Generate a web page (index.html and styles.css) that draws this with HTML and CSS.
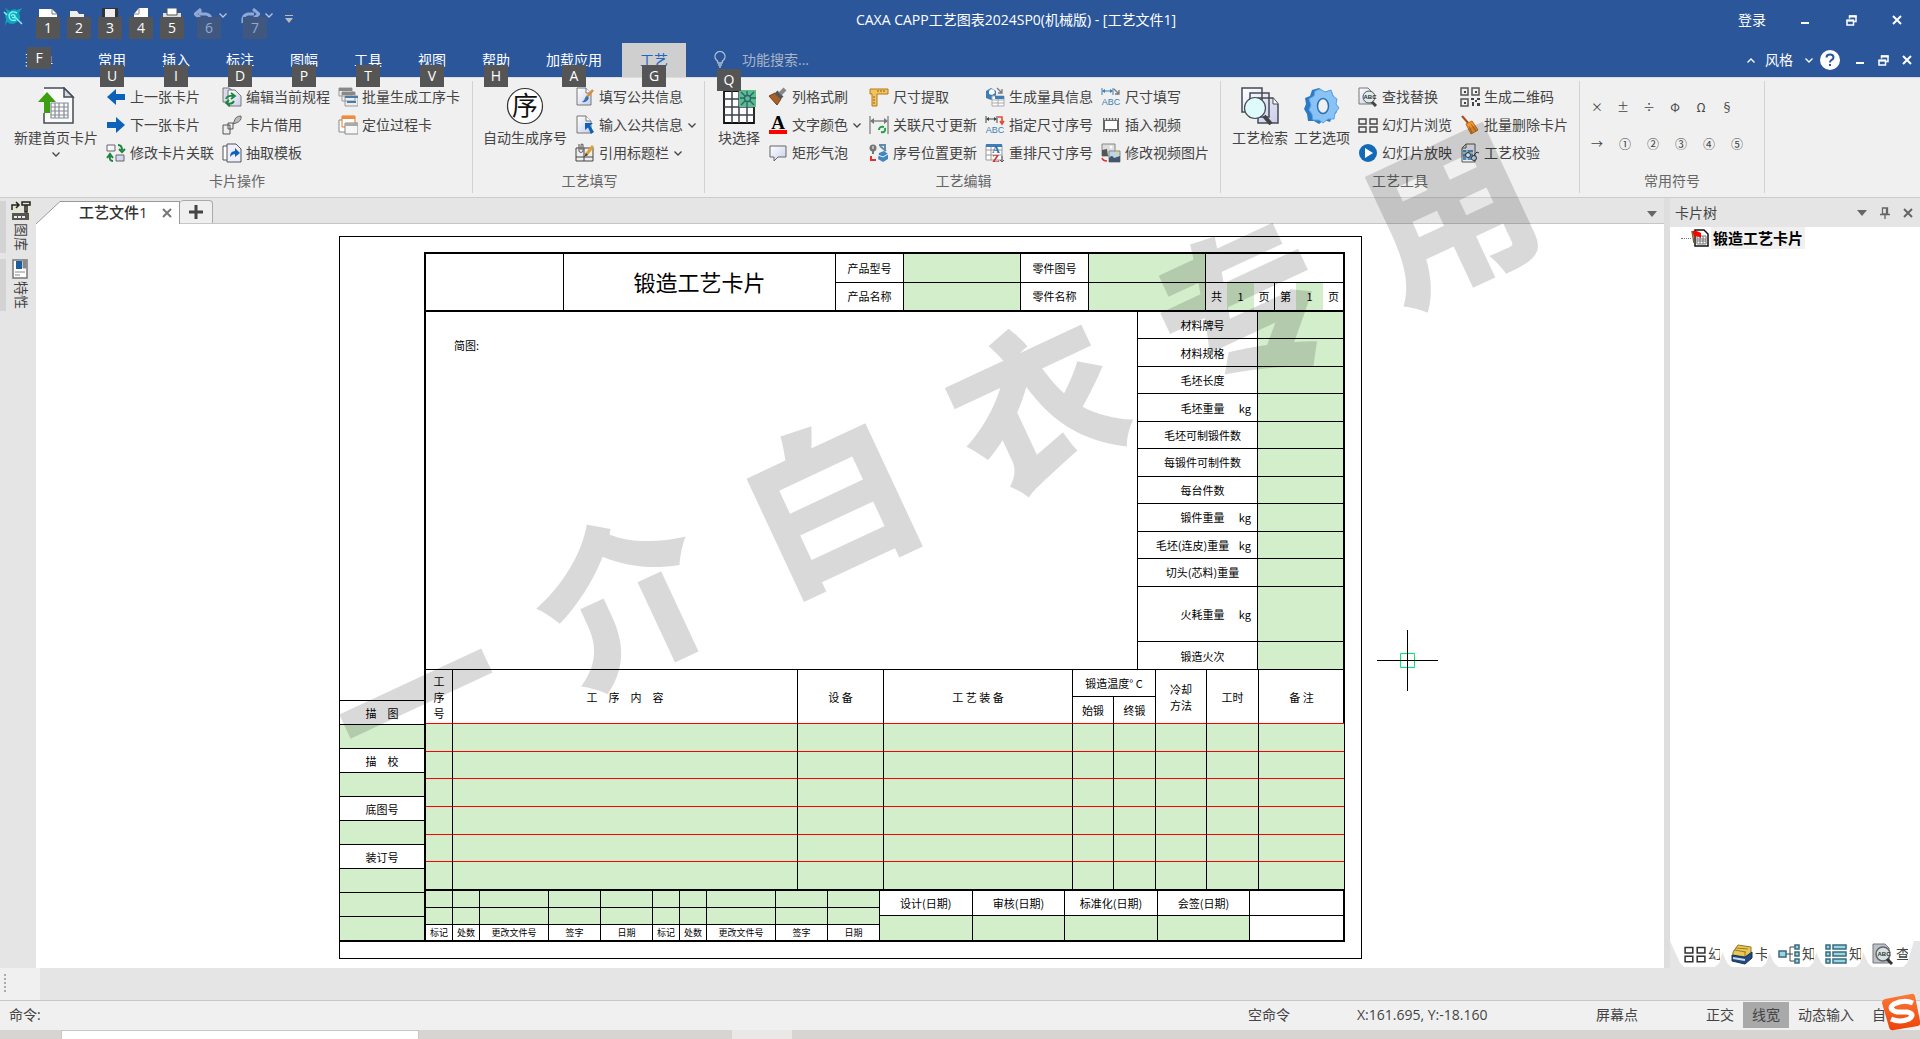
FILE: index.html
```html
<!DOCTYPE html>
<html lang="zh-CN">

<head>
    <meta charset="UTF-8">
    <meta name="viewport" content="width=device-width, initial-scale=1.0">
    <title>CAXA CAPP工艺图表2024SP0(机械版) - [工艺文件1]</title>
    <link rel="stylesheet" href="styles.css">
</head>

<body>

    <!-- 公用图形 -->
    <svg class="defs" width="0" height="0" aria-hidden="true">
        <defs>
            <linearGradient id="paper" x1="0" y1="0" x2="1" y2="1">
                <stop offset="0" stop-color="#ffffff"/>
                <stop offset="1" stop-color="#c9cdea"/>
            </linearGradient>
            <linearGradient id="orange" x1="0" y1="0" x2="0" y2="1">
                <stop offset="0" stop-color="#fb7a3a"/>
                <stop offset="1" stop-color="#ee4208"/>
            </linearGradient>
        </defs>
        <symbol id="chev" viewBox="0 0 8 5"><path d="M.5 .5L4 4 7.500 .5" fill="none" stroke="currentColor" stroke-width="1.300"/></symbol>
        <symbol id="restore" viewBox="0 0 11 11"><path d="M3.500 3.500V1H10V6.500H8M1 5.500H7.500V10H1Z" fill="none" stroke="currentColor" stroke-width="1.500"/><path d="M3 1.500H10.500M.5 5.500H8" stroke="currentColor" stroke-width="2"/></symbol>
        <symbol id="cross" viewBox="0 0 10 10"><path d="M1 1L9 9M9 1L1 9" fill="none" stroke="currentColor" stroke-width="2"/></symbol>
        <symbol id="doc" viewBox="0 0 20 20"><path d="M2 1H11L16 6V18H2Z" fill="url(#paper)" stroke="#777"/><path d="M11 1V6H16" fill="#fff" stroke="#777"/></symbol>
        <symbol id="dim" viewBox="0 0 20 20"><path d="M1 1V8M12 1V8M2 4H11" fill="none" stroke="currentColor"/><path d="M4 2L1 4 4 6ZM9 2L12 4 9 6Z" fill="currentColor"/></symbol>
        <symbol id="slides" viewBox="0 0 20 20"><path d="M1 4H8V9H1ZM12 4H19V9H12ZM1 12H8V17H1ZM12 12H19V17H12Z" fill="none" stroke="currentColor" stroke-width="1.400"/></symbol>
    </svg>

    <header class="top">
        <div class="titlebar">
            <svg class="app-icon" viewBox="0 0 20 20" width="20" height="20"><path d="M2 1L7 4Q10 1 14 3L19 1 16 6Q19 12 14 15 9 19 4 15L2 19 3 12Q1 7 4 5Z" fill="#0da5bd"/><path d="M14 6Q8 3 6 8 6 15 13 13M8 9Q10 6 12 9 11 12 9 10M12 10L19 17M1 5L4 8" fill="none" stroke="#7ff3f0" stroke-width="1.500"/></svg>
            <div class="quick">
                <button class="quick-btn" aria-label="新建"><svg viewBox="0 0 20 20" width="20" height="20"><path d="M1 1H14L19 6V19H1Z" fill="#fff"/><path d="M14 1V6H19" fill="none" stroke="#777"/></svg><span class="key">1</span></button>
                <button class="quick-btn" aria-label="打开"><svg viewBox="0 0 20 20" width="20" height="20"><path d="M1 3H8L10 6H15V10H18V18H1Z" fill="#eee"/></svg><span class="key">2</span></button>
                <button class="quick-btn" aria-label="保存"><svg viewBox="0 0 20 20" width="20" height="20"><path d="M2 0H18V19H2Z" fill="#333"/><path d="M5 1H15V12H5Z" fill="#eee"/></svg><span class="key">3</span></button>
                <button class="quick-btn" aria-label="另存为"><svg viewBox="0 0 20 20" width="20" height="20"><path d="M3 6L8 0H17V18H3Z" fill="#fff"/><path d="M3 6H8V0" fill="none" stroke="#888"/></svg><span class="key">4</span></button>
                <button class="quick-btn" aria-label="打印"><svg viewBox="0 0 20 20" width="20" height="20"><path d="M1 5H19V17H1Z" fill="#ddd"/><path d="M5 0H15V7H5Z" fill="#fff" stroke="#555"/></svg><span class="key">5</span></button>
                <button class="quick-btn wide" aria-label="撤销" disabled><svg viewBox="0 0 20 20" width="20" height="20"><path d="M6 2V6H12Q18 7 17 15M7 1L1 6 7 11" fill="none" stroke="#8fa9d5" stroke-width="3"/></svg><svg class="chev" width="8" height="5"><use href="#chev"/></svg><span class="key">6</span></button>
                <button class="quick-btn wide" aria-label="重做" disabled><svg viewBox="0 0 20 20" width="20" height="20"><path d="M14 6H8Q2 7 3 15M13 1L19 6 13 11" fill="none" stroke="#8fa9d5" stroke-width="3"/></svg><svg class="chev" width="8" height="5"><use href="#chev"/></svg><span class="key">7</span></button>
                <button class="quick-more" aria-label="自定义"><svg viewBox="0 0 8 8" width="8" height="8"><path d="M0 0H8V1H0ZM0 3H8L4 8Z" fill="#bbb"/></svg></button>
            </div>
            <div class="title">CAXA CAPP工艺图表2024SP0(机械版) - [工艺文件1]</div>
            <div class="window-tools">
                <button class="login">登录</button>
                <button class="win" aria-label="最小化"><svg viewBox="0 0 10 10" width="10" height="10"><path d="M1 8H9" stroke="#fff" stroke-width="2"/></svg></button>
                <button class="win" aria-label="还原"><svg width="11" height="11"><use href="#restore"/></svg></button>
                <button class="win" aria-label="关闭"><svg width="10" height="10"><use href="#cross"/></svg></button>
            </div>
        </div>

        <nav class="menubar">
            <button class="menu menu-file">菜单<span class="key">F</span></button>
            <button class="menu">常用<span class="key">U</span></button>
            <button class="menu">插入<span class="key">I</span></button>
            <button class="menu">标注<span class="key">D</span></button>
            <button class="menu">图幅<span class="key">P</span></button>
            <button class="menu">工具<span class="key">T</span></button>
            <button class="menu">视图<span class="key">V</span></button>
            <button class="menu">帮助<span class="key">H</span></button>
            <button class="menu">加载应用<span class="key">A</span></button>
            <button class="menu active">工艺<span class="key">G</span></button>
            <label class="search">
                <svg viewBox="0 0 12 18" width="12" height="18"><path d="M4 12Q4 10 2 8.500A5 5 0 1 1 10 8.500Q8 10 8 12ZM4 14H8M5 16H7" fill="none" stroke="#b4bfd4" stroke-width="1.300"/></svg>
                <input type="text" placeholder="功能搜索..." aria-label="功能搜索">
                <span class="key">Q</span>
            </label>
            <div class="menu-tools">
                <button aria-label="收起功能区"><svg class="up" width="8" height="5"><use href="#chev"/></svg></button>
                <button class="style-btn">风格<svg width="8" height="5"><use href="#chev"/></svg></button>
                <button class="help" aria-label="帮助"><svg viewBox="0 0 20 20" width="20" height="20"><circle cx="10" cy="10" r="10" fill="#fff"/><path d="M6.500 7.500Q6.500 4.500 10 4.500T13.500 7.500Q13.500 9 11.500 10 10 11 10 12.500M10 14V16" fill="none" stroke="#2b579a" stroke-width="2"/></svg></button>
                <button aria-label="最小化窗口"><svg viewBox="0 0 10 10" width="10" height="10"><path d="M1 8H9" stroke="#fff" stroke-width="2"/></svg></button>
                <button aria-label="还原窗口"><svg width="11" height="11"><use href="#restore"/></svg></button>
                <button aria-label="关闭窗口"><svg width="10" height="10"><use href="#cross"/></svg></button>
            </div>
        </nav>
    </header>

    <section class="ribbon">
        <div class="group group-card">
            <div class="group-body">
                <button class="big"><svg viewBox="0 0 38 38" width="38" height="38"><path d="M7 1H27L36 10V36H7V26" fill="#fafafa" stroke="#444c57" stroke-width="1.500"/><path d="M27 1V10H36Z" fill="#d5dae1" stroke="#444c57" stroke-width="1.500"/><path d="M14 16H31V31H14ZM14 20H31M14 24H31M14 28H31M18 16V31M22 16V31M27 16V31" fill="none" stroke="#858b95" stroke-width="1.200"/><path d="M10 5L19 15H13V26H7V15H1Z" fill="#3d9e10"/></svg>新建首页卡片<svg class="chev" width="8" height="5"><use href="#chev"/></svg></button>
                <div class="stack">
                    <button class="small"><svg viewBox="0 0 20 20" width="20" height="20"><path d="M1 10L10 2V7H19V13H10V18Z" fill="#0b62b8"/></svg>上一张卡片</button>
                    <button class="small"><svg viewBox="0 0 20 20" width="20" height="20"><path d="M19 10L10 2V7H1V13H10V18Z" fill="#0b62b8"/></svg>下一张卡片</button>
                    <button class="small"><svg viewBox="0 0 20 20" width="20" height="20"><path d="M1 2H9V8H1ZM10 12H18V18H10Z" fill="url(#paper)" stroke="#666"/><path d="M12 2Q16 2 16 7M13 6L16 9 19 6M7 18Q3 18 4 13M1 15L4 11 7 15" fill="none" stroke="#18863c" stroke-width="2"/></svg>修改卡片关联</button>
                </div>
                <div class="stack">
                    <button class="small"><svg viewBox="0 0 20 20" width="20" height="20"><path d="M1 1H7L10 3V15H1Z" fill="#d9dbeb" stroke="#777"/><path d="M6 3H13L19 9V19H6Z" fill="url(#paper)" stroke="#777"/><path d="M4 12Q5 8 11 9M9 6L13 9 9 12M12 14Q10 18 5 16M7 13L4 16 8 19" fill="none" stroke="#18863c" stroke-width="1.800"/></svg>编辑当前规程</button>
                    <button class="small"><svg viewBox="0 0 20 20" width="20" height="20"><path d="M6 8H11V14H6ZM1 10H8V19H1Z" fill="#eee" stroke="#555"/><path d="M12 7Q13 1 19 1 20 6 14 8L11 9Z" fill="#bbb" stroke="#666"/></svg>卡片借用</button>
                    <button class="small"><svg viewBox="0 0 20 20" width="20" height="20"><path d="M1 3H10V17H1Z" fill="#fff" stroke="#555"/><path d="M5 1H14L19 6V19H5Z" fill="#eef" stroke="#555"/><path d="M8 14Q8 8 13 8V5L18 10 13 14V11Q10 11 8 14Z" fill="#0b62b8"/></svg>抽取模板</button>
                </div>
                <div class="stack">
                    <button class="small"><svg viewBox="0 0 20 20" width="20" height="20"><path d="M1 1H14V9H1ZM4 5H17V14H4ZM7 9H20V19H7Z" fill="#eee" stroke="#999"/><path d="M1 1H14V4H1ZM4 5H17V8H4Z" fill="#888"/><path d="M7 9H20V11H7ZM9 14H18V16H9Z" fill="#4a7cab"/></svg>批量生成工序卡</button>
                    <button class="small"><svg viewBox="0 0 20 20" width="20" height="20"><path d="M1 5H10V17H1Z" fill="#fff" stroke="#888"/><path d="M4 1H17V12H4Z" fill="#fff" stroke="#e97817"/><path d="M4 1H17V4H4Z" fill="#f08b42"/><path d="M7 8H20V19H7Z" fill="#f6f6f6" stroke="#888"/><path d="M7 8H20V11H7Z" fill="#aaa"/></svg>定位过程卡</button>
                </div>
            </div>
            <h2>卡片操作</h2>
        </div>

        <div class="group group-write">
            <div class="group-body">
                <button class="big"><svg viewBox="0 0 38 38" width="38" height="38"><circle cx="19" cy="19" r="17.500" fill="#fff" stroke="#333" stroke-width="1.200"/><text x="19" y="28" text-anchor="middle" class="seal">序</text></svg>自动生成序号</button>
                <div class="stack">
                    <button class="small"><svg viewBox="0 0 20 20" width="20" height="20"><use href="#doc"/><path d="M18 3L11 11" stroke="#d88d32" stroke-width="2.500"/><path d="M12 9L14 11Q12 16 7 15 10 13 10 11Z" fill="#2f74ba"/></svg>填写公共信息</button>
                    <button class="small"><svg viewBox="0 0 20 20" width="20" height="20"><use href="#doc"/><path d="M10 8H18L15 10.500 19 17 16 19 13 12.500 10 15Z" fill="#0b62b8"/></svg>输入公共信息<svg class="chev" width="8" height="5"><use href="#chev"/></svg></button>
                    <button class="small"><svg viewBox="0 0 20 20" width="20" height="20"><path d="M1 5H18V18H1ZM1 14H18M9 5V18" fill="#eee" stroke="#444"/><path d="M4 1V8Q6 11 8 8V2Q6 0 6 3V7" fill="none" stroke="#666" stroke-width="1.200"/><path d="M18 3L11 12" stroke="#dda034" stroke-width="3"/><path d="M11 10L13 12 9 14Z" fill="#444"/></svg>引用标题栏<svg class="chev" width="8" height="5"><use href="#chev"/></svg></button>
                </div>
            </div>
            <h2>工艺填写</h2>
        </div>

        <div class="group group-edit">
            <div class="group-body">
                <button class="big"><svg viewBox="0 0 38 38" width="38" height="38"><path d="M4 4H34V36H4Z" fill="#fff" stroke="#111" stroke-width="1.800"/><path d="M4 12H34M4 20H34M4 28H34M12 4V36M19 4V36M27 4V36" stroke="#3c4250" stroke-width="1.500"/><path d="M19 3H36V20H19Z" fill="#5dbb8e"/><path d="M21 5L25 9M34 5L30 9M21 18L25 14M34 18L30 14M27 4V8M27 15V20M20 11H24M31 11H36" stroke="#27656b" stroke-width="1.300"/><circle cx="27.500" cy="11.500" r="3" fill="none" stroke="#27656b" stroke-width="1.300"/></svg>块选择</button>
                <div class="stack">
                    <button class="small"><svg viewBox="0 0 20 20" width="20" height="20"><path d="M1 9L7 6 13 12 9 18Z" fill="#a96026" stroke="#754015"/><path d="M8 5L14 11" stroke="#555" stroke-width="4"/><path d="M12 7L17 2" stroke="#888" stroke-width="4"/></svg>列格式刷</button>
                    <button class="small"><svg viewBox="0 0 20 20" width="20" height="20"><text x="10" y="14" text-anchor="middle" class="letter-a">A</text><path d="M1 15H19V19H1Z" fill="#f00"/></svg>文字颜色<svg class="chev" width="8" height="5"><use href="#chev"/></svg></button>
                    <button class="small"><svg viewBox="0 0 20 20" width="20" height="20"><path d="M2 3H18V14H10L6 18V14H2Z" fill="url(#paper)" stroke="#666"/></svg>矩形气泡</button>
                </div>
                <div class="stack">
                    <button class="small"><svg viewBox="0 0 20 20" width="20" height="20"><path d="M1 2H19V7H8V19H3V7H1Z" fill="#f3c35b" stroke="#b47b1d"/><path d="M9 3V5M12 3V5M15 3V5M4 10H6M4 13H6M4 16H6" stroke="#8f6219"/></svg>尺寸提取</button>
                    <button class="small"><svg viewBox="0 0 20 20" width="20" height="20"><path d="M1 1V19M19 1V19M2 6H18" stroke="#888" stroke-width="1.400"/><path d="M5 3L1 6 5 9ZM15 3L19 6 15 9Z" fill="#777"/><path d="M10 15Q10 11 15 12M16 13Q17 18 12 17" fill="none" stroke="#20a244" stroke-width="2"/></svg>关联尺寸更新</button>
                    <button class="small"><svg viewBox="0 0 20 20" width="20" height="20"><circle cx="4" cy="5" r="3.500" fill="#777"/><path d="M3 7H5V11H3Z" fill="#777"/><path d="M4 3V6" stroke="#fff"/><path d="M10 2H16V8M11 3L17 8" fill="none" stroke="#648caa" stroke-width="2"/><path d="M10 10L15 8 19 11V16L14 19 9 16Z" fill="#4485bd"/><path d="M9 12L14 14 19 11" stroke="#eef7ff" fill="none"/><path d="M2 13V17H7" stroke="#d33" fill="none" stroke-width="2"/></svg>序号位置更新</button>
                </div>
                <div class="stack">
                    <button class="small"><svg viewBox="0 0 20 20" width="20" height="20"><path d="M1 4L6 1 11 4V11L6 13 1 11Z" fill="#3e7eb6"/><path d="M4 4L6 2 9 3 10 6 7 8 4 7Z" fill="#fff"/><path d="M7 9H19V19H7ZM7 13H19M7 16H19M13 10V19" fill="#fff" stroke="#aaa"/><path d="M10 9H19V12H10Z" fill="#3e7eb6"/><path d="M12 1L17 6M17 2V6H13" fill="none" stroke="#777" stroke-width="1.300"/></svg>生成量具信息</button>
                    <button class="small"><svg viewBox="0 0 20 20" width="20" height="20"><use href="#dim"/><path d="M13 2H17V8M15 6L17 9 19 6" fill="none" stroke="#e44c31" stroke-width="1.600"/><text x="10" y="18" text-anchor="middle" class="abc">ABC</text></svg>指定尺寸序号</button>
                    <button class="small"><svg viewBox="0 0 20 20" width="20" height="20"><path d="M1 2H17V17H1ZM1 7H17M1 12H17M6 2V17" fill="#fff" stroke="#999"/><path d="M1 1H17V4H1Z" fill="#3e7eb6"/><text x="11" y="10" text-anchor="middle" class="sort-a">A</text><text x="11" y="19" text-anchor="middle" class="sort-z">Z</text><path d="M17 13V19M15 17L17 19 19 17" stroke="#555" fill="none"/></svg>重排尺寸序号</button>
                </div>
                <div class="stack">
                    <button class="small dim-blue"><svg viewBox="0 0 20 20" width="20" height="20"><use href="#dim"/><path d="M13 2L18 7M18 3V7H14" fill="none" stroke="#777" stroke-width="1.300"/><text x="10" y="18" text-anchor="middle" class="abc">ABC</text></svg>尺寸填写</button>
                    <button class="small"><svg viewBox="0 0 20 20" width="20" height="20"><path d="M2 3H18V17H2Z" fill="#666"/><path d="M4 6H16V14H4Z" fill="#fff"/><path d="M3 4H17M3 16H17" stroke="#eee" stroke-width="1.500" stroke-dasharray="2 1"/></svg>插入视频</button>
                    <button class="small"><svg viewBox="0 0 20 20" width="20" height="20"><path d="M1 1H14V13H1Z" fill="#ddd" stroke="#888"/><circle cx="10" cy="4" r="1.500" fill="#fff"/><path d="M1 7L6 6 7 13H1Z" fill="#555"/><path d="M8 8H19V19H8Z" fill="#b6d7ed" stroke="#888"/><circle cx="16" cy="10" r="1.500" fill="#f4d55c"/><path d="M8 15Q11 11 13 15L19 13V19H8Z" fill="#46556c"/><path d="M1 15Q2 18 6 18" fill="none" stroke="#d33" stroke-width="1.500"/></svg>修改视频图片</button>
                </div>
            </div>
            <h2>工艺编辑</h2>
        </div>

        <div class="group">
            <div class="group-body">
                <button class="big"><svg viewBox="0 0 38 38" width="38" height="38"><path d="M1 1H21V25H1ZM9 6H28V30H9ZM17 11H32L37 17V36H17Z" fill="url(#paper)" stroke="#444b54" stroke-width="1.500"/><path d="M32 11V17H37" fill="#fff" stroke="#444b54"/><path d="M23 29L30 37" stroke="#444" stroke-width="4"/><circle cx="14" cy="21" r="10.500" fill="#dffafa" stroke="#444b54" stroke-width="1.200"/></svg>工艺检索</button>
                <button class="big"><svg viewBox="0 0 38 38" width="38" height="38"><path d="M16 1L21 5L28 3 31 10 34 13 32 19 34 25 29 30 27 35 21 33 16 37 11 34 5 34 4 27 1 22 3 17 2 11 7 9 9 3Z" fill="#2b79c7"/><path d="M17 2L22 5 28 3 30 9 34 12 33 17 36 21 32 26 31 32 25 32 20 36 16 33 10 33 9 27 6 23 8 18 6 12 11 9 12 4Z" fill="#89c3f5" stroke="#5ba3e0"/><ellipse cx="20" cy="19" rx="5.500" ry="7.500" fill="#f0f0f0" stroke="#2b6fb1" stroke-width="1.500"/></svg>工艺选项</button>
                <div class="stack">
                    <button class="small"><svg viewBox="0 0 20 20" width="20" height="20"><path d="M1 1H10L14 5V17H1Z" fill="url(#paper)" stroke="#777"/><circle cx="11" cy="10" r="6" fill="#ddecec" stroke="#555"/><path d="M14 15L18 19" stroke="#444" stroke-width="3"/><text x="12" y="12" text-anchor="middle" class="find">ABC</text></svg>查找替换</button>
                    <button class="small"><svg width="20" height="20"><use href="#slides"/></svg>幻灯片浏览</button>
                    <button class="small"><svg viewBox="0 0 20 20" width="20" height="20"><circle cx="10" cy="10" r="9" fill="#1269b8"/><path d="M7 5L15 10 7 15Z" fill="#fff"/></svg>幻灯片放映</button>
                </div>
                <div class="stack">
                    <button class="small"><svg viewBox="0 0 20 20" width="20" height="20"><path d="M1 1H8V8H1ZM12 1H19V8H12ZM1 12H8V19H1Z" fill="none" stroke="#555" stroke-width="1.500"/><path d="M4 4H6V6H4ZM15 4H17V6H15ZM4 15H6V17H4ZM11 11H14V13H11ZM15 13H17V15H15ZM12 15H14V19H12ZM17 16H20V19H17ZM17 11H20V13H17Z" fill="#444"/></svg>生成二维码</button>
                    <button class="small"><svg viewBox="0 0 20 20" width="20" height="20"><path d="M2 1L9 9" stroke="#a94c1b" stroke-width="2"/><path d="M6 9L12 6 18 15 11 19Z" fill="#ef982e" stroke="#bd691a"/><path d="M9 11L12 18M11 9L16 16" stroke="#b6651c"/></svg>批量删除卡片</button>
                    <button class="small"><svg viewBox="0 0 20 20" width="20" height="20"><path d="M2 5L6 1H15V19H2ZM2 5H6V1" fill="#ececf2" stroke="#555"/><path d="M3 7H13V17H3Z" fill="#4d8ab8"/><path d="M3 10H13M7 7V17" stroke="#fff"/><circle cx="8" cy="12" r="2.500" fill="#cde" stroke="#333"/><circle cx="14" cy="15" r="2.500" fill="#cde" stroke="#333"/><path d="M14 12L17 9 19 10" stroke="#333" fill="none"/></svg>工艺校验</button>
                </div>
            </div>
            <h2>工艺工具</h2>
        </div>

        <div class="group group-symbols">
            <div class="symbols">
                <div class="symbol-row close">
                    <button>×</button><button>±</button><button>÷</button><button>Φ</button><button>Ω</button><button>§</button>
                </div>
                <div class="symbol-row">
                    <button>→</button><button>①</button><button>②</button><button>③</button><button>④</button><button>⑤</button>
                </div>
            </div>
            <h2>常用符号</h2>
        </div>
    </section>

    <main class="work">
        <aside class="side">
            <button class="side-tab"><svg viewBox="0 0 20 20" width="20" height="20"><path d="M0 0H20V20H0Z" fill="#e6e6d4"/><path d="M1 9V4H7M5 1L8 4 5 7M11 1H19V4H11ZM14 4H16V11H14Z" fill="none" stroke="#222" stroke-width="1.500"/><path d="M1 12H18V19H1Z" fill="#555"/><path d="M3 16H15" stroke="#eee" stroke-width="2" stroke-dasharray="3 1"/></svg>图库</button>
            <button class="side-tab"><svg viewBox="0 0 20 20" width="20" height="20"><path d="M2 1H16V19H2Z" fill="#fff" stroke="#777" stroke-width="1.500"/><path d="M5 2H11V10H5Z" fill="#1c5d9c"/><path d="M12 2H15V9H12ZM4 13H14M4 16H9" fill="#888" stroke="#888"/></svg>特性</button>
        </aside>

        <div class="editor">
            <div class="doc-tabs">
                <div class="doc-tab">
                    <svg class="doc-slope" viewBox="0 0 25 23" width="25" height="23"><path d="M0 23L24 0H25V23Z" fill="#fff"/><path d="M0 23L24 .5H25" fill="none" stroke="#999"/></svg>
                    <span>工艺文件1</span>
                    <button aria-label="关闭文件"><svg width="10" height="10"><use href="#cross"/></svg></button>
                </div>
                <button class="doc-add" aria-label="新建文件"><svg viewBox="0 0 14 14" width="14" height="14"><path d="M7 0V14M0 7H14" stroke="#444" stroke-width="3"/></svg></button>
                <button class="doc-list" aria-label="文件列表"><svg viewBox="0 0 10 6" width="10" height="6"><path d="M0 0H10L5 6Z" fill="#666"/></svg></button>
            </div>

            <div class="canvas">
                <div class="sheet">
                    <table class="binding">
                        <tr><th>描&emsp;图</th></tr>
                        <tr><td></td></tr>
                        <tr><th>描&emsp;校</th></tr>
                        <tr><td></td></tr>
                        <tr><th>底图号</th></tr>
                        <tr><td></td></tr>
                        <tr><th>装订号</th></tr>
                        <tr><td></td></tr>
                        <tr><td></td></tr>
                        <tr><td></td></tr>
                    </table>

                    <div class="frame">
                        <table class="heading">
                            <colgroup>
                                <col class="w-logo"><col class="w-name"><col class="w-key"><col class="w-value"><col class="w-key"><col class="w-value">
                                <col class="w-unit"><col class="w-page"><col class="w-unit"><col class="w-unit"><col class="w-page"><col class="w-unit">
                            </colgroup>
                            <tr>
                                <th rowspan="2"></th>
                                <th rowspan="2" class="card-name">锻造工艺卡片</th>
                                <th>产品型号</th><td class="fill"></td>
                                <th>零件图号</th><td class="fill"></td>
                                <td colspan="6"></td>
                            </tr>
                            <tr>
                                <th>产品名称</th><td class="fill"></td>
                                <th>零件名称</th><td class="fill"></td>
                                <th class="open">共</th><td class="fill open">1</td><th>页</th>
                                <th class="open">第</th><td class="fill open">1</td><th>页</th>
                            </tr>
                        </table>

                        <div class="middle">
                            <div class="sketch">简图:</div>
                            <table class="materials">
                                <tr><th>材料牌号</th><td></td></tr>
                                <tr><th>材料规格</th><td></td></tr>
                                <tr><th>毛坯长度</th><td></td></tr>
                                <tr><th>毛坯重量<span class="unit">kg</span></th><td></td></tr>
                                <tr><th>毛坯可制锻件数</th><td></td></tr>
                                <tr><th>每锻件可制件数</th><td></td></tr>
                                <tr><th>每台件数</th><td></td></tr>
                                <tr><th>锻件重量<span class="unit">kg</span></th><td></td></tr>
                                <tr><th class="long">毛坯(连皮)重量<span class="unit">kg</span></th><td></td></tr>
                                <tr><th>切头(芯料)重量</th><td></td></tr>
                                <tr class="tall"><th>火耗重量<span class="unit">kg</span></th><td></td></tr>
                                <tr><th>锻造火次</th><td></td></tr>
                            </table>
                        </div>

                        <table class="process">
                            <colgroup>
                                <col class="w-no"><col class="w-content"><col class="w-device"><col class="w-tool"><col class="w-start"><col class="w-end"><col class="w-cool"><col class="w-time"><col class="w-note">
                            </colgroup>
                            <thead>
                                <tr>
                                    <th rowspan="2">工<br>序<br>号</th>
                                    <th rowspan="2">工&emsp;序&emsp;内&emsp;容</th>
                                    <th rowspan="2">设 备</th>
                                    <th rowspan="2">工 艺 装 备</th>
                                    <th colspan="2">锻造温度° C</th>
                                    <th rowspan="2">冷却<br>方法</th>
                                    <th rowspan="2">工时</th>
                                    <th rowspan="2">备 注</th>
                                </tr>
                                <tr><th>始锻</th><th>终锻</th></tr>
                            </thead>
                            <tbody>
                                <tr><td></td><td></td><td></td><td></td><td></td><td></td><td></td><td></td><td></td></tr>
                                <tr><td></td><td></td><td></td><td></td><td></td><td></td><td></td><td></td><td></td></tr>
                                <tr><td></td><td></td><td></td><td></td><td></td><td></td><td></td><td></td><td></td></tr>
                                <tr><td></td><td></td><td></td><td></td><td></td><td></td><td></td><td></td><td></td></tr>
                                <tr><td></td><td></td><td></td><td></td><td></td><td></td><td></td><td></td><td></td></tr>
                                <tr><td></td><td></td><td></td><td></td><td></td><td></td><td></td><td></td><td></td></tr>
                            </tbody>
                        </table>

                        <div class="footing">
                            <table class="changes">
                                <colgroup>
                                    <col class="w-mark"><col class="w-mark"><col class="w-file"><col class="w-sign"><col class="w-sign">
                                    <col class="w-mark"><col class="w-mark"><col class="w-file"><col class="w-sign"><col class="w-sign">
                                </colgroup>
                                <tr><td></td><td></td><td></td><td></td><td></td><td></td><td></td><td></td><td></td><td></td></tr>
                                <tr><td></td><td></td><td></td><td></td><td></td><td></td><td></td><td></td><td></td><td></td></tr>
                                <tr><th>标记</th><th>处数</th><th>更改文件号</th><th>签字</th><th>日期</th><th>标记</th><th>处数</th><th>更改文件号</th><th>签字</th><th>日期</th></tr>
                            </table>
                            <table class="approval">
                                <tr><th>设计(日期)</th><th>审核(日期)</th><th>标准化(日期)</th><th>会签(日期)</th><th></th></tr>
                                <tr><td></td><td></td><td></td><td></td><th></th></tr>
                            </table>
                        </div>
                    </div>
                </div>

                <svg class="cursor" viewBox="0 0 61 61" width="61" height="61"><path d="M23.500 23.500H37.500V37.500H23.500Z" fill="none" stroke="#00e878"/><path d="M0 30.500H61M30.500 0V61" stroke="#000"/></svg>
            </div>
        </div>

        <aside class="panel">
            <div class="panel-head">
                <span>卡片树</span>
                <button aria-label="选项"><svg viewBox="0 0 10 6" width="10" height="6"><path d="M0 0H10L5 6Z" fill="#666"/></svg></button>
                <button aria-label="固定"><svg viewBox="0 0 10 12" width="10" height="12"><path d="M2.500 1H7.500V7H2.500ZM0 7.500H10M5 8V12M6.500 1V7" fill="none" stroke="#666" stroke-width="1.300"/></svg></button>
                <button aria-label="关闭面板"><svg width="10" height="10"><use href="#cross"/></svg></button>
            </div>
            <div class="tree">
                <a class="node" href="#"><i></i><svg viewBox="0 0 18 18" width="18" height="18"><path d="M4 1H13L17 5V17H4Z" fill="#fff" stroke="#111" stroke-width="1.500"/><path d="M6 7H15V15H6ZM6 10H15M6 12H15M9 7V15M12 7V15" fill="none" stroke="#777"/><path d="M1 2Q5 1 10 4V9Q6 6 3 8Z" fill="#f00"/><path d="M1 2L3 14" stroke="#7b6427" stroke-width="1.500"/></svg><span>锻造工艺卡片</span></a>
            </div>
            <div class="panel-tabs">
                <button><svg class="dark" width="22" height="22"><use href="#slides"/></svg><span>幻</span></button>
                <button><svg viewBox="0 0 22 22" width="22" height="22"><path d="M2 9L7 2 20 4V13L14 18 2 16Z" fill="#e8c756" stroke="#927426"/><path d="M3 7L15 9M5 5L17 6M14 9V17" stroke="#9c7b25"/><path d="M1 12L14 14 21 9V15L14 21 1 18Z" fill="#214a83" stroke="#183354"/><path d="M2 15L14 17" stroke="#cbdcf3" stroke-width="2"/></svg><span>卡</span></button>
                <button><svg viewBox="0 0 22 22" width="22" height="22"><path d="M8 11H15M12 4V18M12 4H17M12 18H17" fill="none" stroke="#444"/><path d="M1 8H8V14H1ZM17 2H21V6H17ZM17 9H21V13H17ZM17 16H21V20H17Z" fill="#9cd5e2" stroke="#376b7d" stroke-width="1.500"/></svg><span>知</span></button>
                <button><svg viewBox="0 0 22 22" width="22" height="22"><path d="M1 2H5V6H1ZM1 9H5V13H1ZM1 16H5V20H1ZM8 2H21V6H8ZM8 9H21V13H8ZM8 16H21V20H8Z" fill="#9cd5e2" stroke="#376b7d" stroke-width="1.500"/></svg><span>知</span></button>
                <button><svg viewBox="0 0 22 22" width="22" height="22"><path d="M1 1H13L17 5V20H1Z" fill="#bcc1cd" stroke="#777"/><circle cx="11" cy="11" r="7" fill="#d7e2e4" stroke="#666" stroke-width="1.500"/><path d="M15 16L20 21" stroke="#333" stroke-width="3"/><text x="12" y="13" text-anchor="middle" class="find">ABC</text></svg><span>查</span></button>
            </div>
        </aside>
    </main>

    <div class="strip"><div class="grip"><i></i><i></i><i></i><i></i><i></i></div></div>

    <footer class="status">
        <span class="command">命令:</span>
        <span class="state">空命令</span>
        <span class="coords">X:161.695, Y:-18.160</span>
        <span class="snap">屏幕点</span>
        <button>正交</button>
        <button class="on">线宽</button>
        <button>动态输入</button>
        <button class="last">自</button>
    </footer>

    <div class="desktop"><div class="desktop-box"></div><div class="desktop-mid"></div><div class="desktop-light"></div></div>

    <svg class="ime" viewBox="0 0 38 38" width="38" height="38"><path d="M3 6L29 1Q32 0 33 3L38 28Q39 32 36 33L12 37Q8 38 7 34L0 10Q0 7 3 6Z" fill="url(#orange)"/><path d="M31 10Q22 6 12 11 5 16 15 19L25 19Q34 21 27 26 18 30 9 26" fill="none" stroke="#fff" stroke-width="5"/></svg>

    <div class="watermark"><span>一</span><span>介</span><span>白</span><span>衣</span><span>专</span><span>用</span></div>

</body>

</html>
```

FILE: styles.css
```css
* {
    box-sizing: border-box;
}

body {
    margin: 0;
    height: 100vh;
    display: flex;
    flex-direction: column;
    position: relative;
    overflow: hidden;
    background-color: #e5e5e5;
    color: #444;
    font-family: "Open Sans", "Noto Sans CJK SC", sans-serif;
    font-size: 14px;
    line-height: 20px;
}

button {
    margin: 0;
    padding: 0;
    border: none;
    background: none;
    color: inherit;
    font: inherit;
    white-space: nowrap;
}

svg {
    flex: none;
}

.defs {
    position: absolute;
}

/* 标题栏和菜单 */
.top {
    background-color: #2b579a;
    color: #fff;
}

.titlebar {
    height: 40px;
    display: grid;
    grid-template-columns: 1fr auto 1fr;
    align-items: center;
    position: relative;
}

.app-icon {
    position: absolute;
    left: 3px;
    top: 7px;
}

.quick {
    display: flex;
    align-self: start;
    gap: 11px;
    padding: 8px 0 0 38px;
}

.quick-btn {
    position: relative;
    display: flex;
    width: 20px;
    height: 20px;
}

.quick-btn.wide {
    width: 34px;
    gap: 5px;
    margin-left: 1px;
}

.quick-btn .chev {
    margin-top: 5px;
    color: #b7c5df;
}

.quick-more {
    align-self: flex-start;
    height: 20px;
}

.key {
    position: absolute;
    left: -2px;
    top: 9px;
    z-index: 2;
    width: 24px;
    height: 22px;
    background-color: #555;
    color: #fff;
    line-height: 22px;
    text-align: center;
}

.wide .key {
    left: 3px;
    background-color: #40587f;
    color: #8fa9d5;
}

.title {
    padding: 0 0 1px 112px;
}

.window-tools {
    display: flex;
    justify-content: flex-end;
    align-items: center;
    padding-right: 17px;
}

.login {
    margin-right: 33px;
}

.win {
    width: 12px;
    height: 20px;
    margin-left: 34px;
    display: flex;
    align-items: center;
    justify-content: center;
}

.login + .win {
    margin-left: 0;
}

.menubar {
    height: 37px;
    display: flex;
    align-items: flex-end;
}

.menu {
    position: relative;
    height: 34px;
    padding: 0 18px;
}

.menu .key {
    left: calc(50% - 12px);
    top: 22px;
}

.menu-file {
    padding: 0 27px 0 25px;
}

.menu-file .key {
    left: 27px;
    top: 4px;
}

.menu.active {
    margin-left: 2px;
    background-color: #cfcfcf;
    color: #1e66c4;
}

.search {
    position: relative;
    display: flex;
    align-items: center;
    gap: 16px;
    height: 34px;
    margin-left: 28px;
}

.search input {
    width: 150px;
    padding: 0;
    border: none;
    background: none;
    color: #fff;
    font: inherit;
    outline: none;
}

.search input::placeholder {
    color: #a9b4c8;
    opacity: 1;
}

.search .key {
    left: 3px;
    top: 26px;
}

.menu-tools {
    display: flex;
    align-items: center;
    gap: 13px;
    height: 34px;
    margin-left: auto;
    padding-right: 8px;
}

.menu-tools button {
    display: flex;
    align-items: center;
}

.menu-tools .style-btn {
    gap: 12px;
    margin: 0 -6px 0 -3px;
}

.menu-tools .help {
    margin-right: 2px;
}

.up {
    transform: rotate(180deg);
}

/* 功能区 */
.ribbon {
    display: flex;
    height: 121px;
    padding: 3px 0 4px;
    border-top: 1px solid #dcdcdc;
    border-bottom: 1px solid #ccc;
    background-color: #f0f0f0;
}

.group {
    display: flex;
    flex-direction: column;
    padding: 0 11px;
    border-right: 1px solid #d2d2d2;
}

.group-card {
    padding: 0 12px 0 14px;
}

.group-write {
    padding: 0 8px 0 10px;
}

.group-edit {
    padding: 0 11px 0 13px;
}

.group h2 {
    margin: 5px 0 0;
    color: #666;
    font-size: 14px;
    font-weight: normal;
    line-height: 20px;
    text-align: center;
}

.group-body {
    display: flex;
    gap: 8px;
    height: 85px;
    padding-top: 2px;
}

.stack {
    display: flex;
    flex-direction: column;
    gap: 8px;
    padding-top: 4px;
}

.small {
    display: flex;
    align-items: center;
    gap: 4px;
    height: 20px;
}

.small .chev {
    margin-left: 1px;
}

.big {
    display: flex;
    flex-direction: column;
    align-items: center;
    padding-top: 4px;
    line-height: 26px;
}

.big .chev {
    margin-top: 1px;
}

.big + .big {
    margin-left: -2px;
}

.seal {
    font: 26px "Noto Sans CJK SC", sans-serif;
    fill: #111;
}

.letter-a {
    font: bold 19px "Liberation Serif", serif;
    fill: #000;
}

.abc {
    font: 9px "Liberation Sans", sans-serif;
    fill: #3d7eb5;
}

.sort-a {
    font: bold 11px "Liberation Serif", serif;
    fill: #2c6fa8;
}

.sort-z {
    font: bold 11px "Liberation Serif", serif;
    fill: #c33;
}

.find {
    font: bold 6px "Liberation Sans", sans-serif;
    fill: #333;
}

.dim-blue use {
    color: #3d7eb5;
}

.dark {
    color: #333;
}

.group-symbols {
    padding: 0 6px;
}

.symbols {
    display: flex;
    flex-direction: column;
    gap: 17px;
    height: 85px;
    padding: 16px 10px 0 0;
}

.symbol-row {
    display: flex;
    gap: 6px;
}

.symbol-row.close {
    gap: 4px;
}

.symbol-row button {
    width: 22px;
    font-family: "Noto Sans CJK SC", sans-serif;
    font-size: 12px;
}

/* 工作区 */
.work {
    flex: 1;
    min-height: 0;
    display: flex;
}

.side {
    width: 36px;
    padding-top: 3px;
}

.side-tab {
    display: flex;
    align-items: center;
    gap: 2px;
    width: 36px;
    height: 52px;
    margin-bottom: 6px;
    border-left: 6px solid #d3d3d3;
    writing-mode: vertical-rl;
    text-orientation: sideways;
}

.editor {
    flex: 1;
    min-width: 0;
    display: flex;
    flex-direction: column;
}

.doc-tabs {
    display: flex;
    align-items: flex-end;
    height: 26px;
    border-bottom: 1px solid #c6c6c6;
}

.doc-tab {
    display: flex;
    align-items: center;
    height: 23px;
    margin-bottom: -1px;
    background: linear-gradient(#fff, #fff) 25px 0 no-repeat;
}

.doc-tab span {
    width: 101px;
    height: 23px;
    padding-left: 18px;
    border-top: 1px solid #999;
    font-size: 15px;
    font-weight: 500;
    color: #333;
}

.doc-tab button {
    display: flex;
    align-items: center;
    height: 23px;
    width: 18px;
    border-top: 1px solid #999;
    border-right: 1px solid #999;
    color: #777;
}

.doc-add {
    width: 33px;
    height: 23px;
    border: 1px solid #aaa;
    border-width: 1px 1px 0 0;
    border-radius: 4px 4px 0 0;
    background-color: #efefef;
}

.doc-add svg {
    display: block;
    margin: 0 auto;
}

.doc-list {
    margin: 0 7px 0 auto;
    height: 23px;
}

.canvas {
    flex: 1;
    position: relative;
    padding: 12px 302px 0 303px;
    background-color: #fff;
}

/* 图纸 */
.sheet {
    display: flex;
    align-items: flex-end;
    padding: 15px 16px 16px 0;
    border: 1px solid #000;
    color: #000;
    font-family: "Noto Sans CJK SC", sans-serif;
    font-size: 11px;
    line-height: 16px;
}

.sheet table {
    width: 100%;
    border-collapse: separate;
    border-spacing: 0;
    table-layout: fixed;
}

.sheet th,
.sheet td {
    padding: 0;
    border: 0 solid #000;
    border-width: 0 1px 1px 0;
    font-weight: normal;
    text-align: center;
    white-space: nowrap;
}

.sheet .fill,
.binding td,
.materials td,
.process td,
.changes td,
.approval td {
    background-color: #d3eecb;
}

.sheet .binding {
    flex: none;
    width: 84px;
    border-top: 1px solid #000;
    border-bottom: 1px solid #000;
}

.binding th,
.binding td {
    height: 24px;
}

.sheet .binding th,
.sheet .binding td {
    border-right: none;
}

.frame {
    flex: 1;
    min-width: 0;
    border: 2px solid #000;
}

.heading {
    height: 58px;
    border-bottom: 1px solid #000;
}

.heading tr {
    height: 28px;
}

.sheet .heading .open {
    border-right: none;
}

.sheet .card-name {
    padding-bottom: 3px;
    font-size: 22px;
}

.w-logo { width: 138px; }
.w-name { width: 272px; }
.w-key { width: 68px; }
.w-value { width: 117px; }
.w-unit { width: 21px; }
.w-page { width: 27px; }

.heading tr:first-child > :last-child,
.heading tr:last-child > :last-child,
.materials td,
.process tr > :last-child,
.approval tr > :last-child {
    border-right: none !important;
}

.process thead tr:last-child > th:last-child {
    border-right: 1px solid #000 !important;
}

.middle {
    display: flex;
}

.sketch {
    flex: 1;
    padding: 25px 28px;
    border-right: 1px solid #000;
    border-bottom: 1px solid #000;
}

.sheet .materials {
    flex: none;
    width: 205px;
    height: 358px;
}

.materials tr {
    height: 27px;
}

.materials .tall {
    height: 55px;
}

.materials th {
    position: relative;
    width: 120px;
    padding: 0 0 0 10px !important;
}

.sheet .materials .long {
    padding: 0 10px 0 0 !important;
}

.unit {
    position: absolute;
    right: 6px;
}

.w-no { width: 27px; }
.w-content { width: 345px; }
.w-device { width: 86px; }
.w-tool { width: 189px; }
.w-start { width: 41px; }
.w-end { width: 42px; }
.w-cool { width: 51px; }
.w-time { width: 52px; }
.w-note { width: 85px; }

.process {
    height: 221px;
    border-bottom: 1px solid #000;
}

.process thead tr,
.process tbody tr {
    height: 27px;
}

.process thead tr:first-child > [rowspan],
.process thead tr:last-child > th,
.process tbody tr:not(:last-child) > td {
    border-bottom-color: #f00;
}

.process thead tr:last-child > th:last-child {
    border-bottom-color: #f00 !important;
}

.footing {
    display: flex;
    height: 49px;
}

.sheet .changes {
    width: 454px;
    flex: none;
    font-size: 9px;
    line-height: 12px;
}

.changes td {
    height: 17px;
}

.changes th {
    height: 15px;
}

.approval th,
.approval td {
    height: 24px;
}

.approval {
    flex: 1;
}

.w-mark { width: 27px; }
.w-file { width: 69px; }
.w-sign { width: 52px; }

.footing tr:last-child > * {
    border-bottom: none;
}

/* 十字光标 */
.cursor {
    position: absolute;
    left: 1341px;
    top: 406px;
}

/* 卡片树 */
.panel {
    width: 256px;
    display: flex;
    flex-direction: column;
    border-left: 6px solid #dedede;
}

.panel-head {
    display: flex;
    align-items: center;
    gap: 13px;
    height: 29px;
    padding: 0 7px 0 5px;
}

.panel-head span {
    margin-right: auto;
}

.panel-head button {
    display: flex;
    color: #666;
}

.tree {
    flex: 1;
    padding-left: 11px;
    background-color: #fff;
}

.node {
    display: flex;
    align-items: center;
    color: #000;
    font-size: 15px;
    font-weight: bold;
    line-height: 22px;
    text-decoration: none;
}

.node i {
    width: 10px;
    border-top: 1px dotted #777;
}

.node span {
    margin-left: 2px;
    padding: 0 2px;
    background-color: #f0f0f0;
}

.panel-tabs {
    display: flex;
    height: 27px;
    overflow: hidden;
}

.panel-tabs button {
    display: flex;
    align-items: center;
    gap: 2px;
    width: 56px;
    height: 26px;
    margin-right: -9px;
    padding-left: 14px;
    background-color: #fff;
    clip-path: polygon(0 0, 100% 0, 88% 85%, 80% 100%, 26% 100%, 18% 85%);
}

.panel-tabs span {
    width: 12px;
    overflow: hidden;
}

/* 底部 */
.strip {
    height: 32px;
    background-color: #e5e5e5;
}

.grip {
    display: flex;
    flex-direction: column;
    gap: 2px;
    width: 40px;
    height: 32px;
    padding: 6px 4px;
    background-color: #f0f0f0;
}

.grip i {
    width: 2px;
    height: 2px;
    background-color: #aaa;
}

.status {
    display: flex;
    align-items: center;
    height: 30px;
    padding: 0 0 2px 9px;
    border-top: 1px solid #c8c8c8;
    background-color: #f0f0f0;
}

.command {
    flex: 1;
}

.state {
    width: 109px;
}

.coords {
    width: 239px;
}

.snap {
    width: 101px;
}

.status button {
    height: 26px;
    padding: 0 9px;
}

.status .on {
    background-color: #a9a9a9;
}

.status .last {
    width: 57px;
    text-align: left;
}

.desktop {
    display: flex;
    height: 9px;
    padding-left: 61px;
    background-color: #d8d4d1;
}

.desktop-box {
    width: 358px;
    border: 1px solid #c8c8c8;
    border-bottom: none;
    background-color: #fff;
}

.desktop-mid {
    width: 313px;
}

.desktop-light {
    width: 60px;
    background-color: #eae8e6;
}

.ime {
    position: absolute;
    right: 0;
    bottom: 8px;
}

.watermark {
    position: absolute;
    left: 929px;
    top: 446px;
    z-index: 5;
    display: flex;
    gap: 60px;
    color: rgba(0, 0, 0, 0.15);
    font-family: "Noto Sans CJK SC", sans-serif;
    font-size: 168px;
    font-weight: 900;
    line-height: 200px;
    pointer-events: none;
    transform: translate(-50%, -50%) rotate(-25deg);
}
```
